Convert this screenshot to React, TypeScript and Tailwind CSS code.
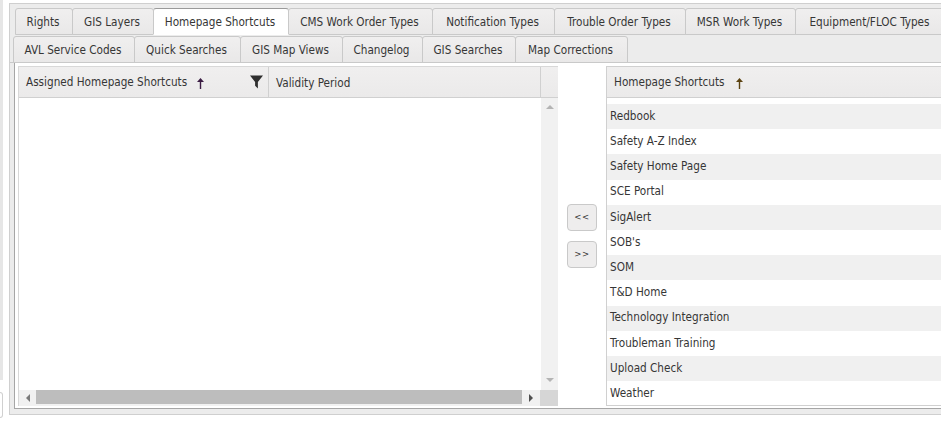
const tabsTop = [
  { label: 'Rights', w: 'w-[58px]' },
  { label: 'GIS Layers', w: 'w-[82px]' },
  { label: 'Homepage Shortcuts', w: 'w-[136px]', active: true },
  { label: 'CMS Work Order Types', w: 'w-[145px]' },
  { label: 'Notification Types', w: 'w-[123px]' },
  { label: 'Trouble Order Types', w: 'w-[132px]' },
  { label: 'MSR Work Types', w: 'w-[111px]' },
  { label: 'Equipment/FLOC Types', w: 'w-[151px]' },
];

const tabsBottom = [
  { label: 'AVL Service Codes', w: 'w-[122px]' },
  { label: 'Quick Searches', w: 'w-[107px]' },
  { label: 'GIS Map Views', w: 'w-[103px]' },
  { label: 'Changelog', w: 'w-[81px]' },
  { label: 'GIS Searches', w: 'w-[94px]' },
  { label: 'Map Corrections', w: 'w-[113px]' },
];

const shortcuts = [
  'Redbook',
  'Safety A-Z Index',
  'Safety Home Page',
  'SCE Portal',
  'SigAlert',
  "SOB's",
  'SOM',
  'T&D Home',
  'Technology Integration',
  'Troubleman Training',
  'Upload Check',
  'Weather',
];

const Tab = ({ label, w, active }: { label: string; w: string; active?: boolean }) => (
  <div
    className={`${w} -ml-px h-[27px] shrink-0 flex items-center justify-center pt-[2px] pr-[2px] rounded-t-[3px] border border-[#c9c9c9] first:ml-0 ${
      active ? 'relative bg-white border-b-white border-t-[#9a9a9a]' : 'bg-linear-to-b from-[#f0efef] to-[#e9e8e8]'
    }`}
  >
    {label}
  </div>
);

const SortArrow = ({ color, ml }: { color: string; ml: string }) => (
  <svg width="7" height="11" viewBox="0 0 7 11" className={`${ml} mt-[1px]`}>
    <path d="M3.5 0 L7 4 H4.2 V11 H2.8 V4 H0 Z" fill={color} />
  </svg>
);

const App = () => {
  return (
    <div className="w-[941px] h-[425px] overflow-hidden bg-white flex text-[11.65px] text-[#363636] font-['DejaVu_Sans_Condensed','DejaVu_Sans',sans-serif]">
      <div className="w-[3px] shrink-0 flex flex-col">
        <div className="h-[380px] bg-[#e6e6e6]" />
        <div className="mt-[12px] h-[26px] rounded-r-[3px] border border-l-0 border-[#d0d0d0]" />
      </div>
      <div className="mt-[3px] ml-[6px] w-[940px] h-[412px] shrink-0 border border-[#cfcfcf] border-r-0 bg-[#ececec] flex flex-col">
        <div className="pt-[4px] flex flex-col">
          <div className="flex pl-[5px] mb-[1px]">
            {tabsTop.map((t) => (
              <Tab key={t.label} {...t} />
            ))}
          </div>
          <div className="flex pl-[3px] h-[27px] border-b border-[#c9c9c9]">
            {tabsBottom.map((t) => (
              <Tab key={t.label} {...t} />
            ))}
          </div>
        </div>
        <div className="ml-[4px] mb-[5px] flex-1 min-h-0 border-l border-b border-[#a6a6a6] bg-white pt-[3px] pl-[3px] pb-[2px] flex">
          <div className="w-[540px] shrink-0 flex flex-col border-t border-l border-[#d8d8d8] bg-white">
            <div className="h-[31px] shrink-0 flex bg-linear-to-b from-[#f0efef] to-[#ebeaea] border-b border-[#d0d0d0]">
              <div className="w-[250px] flex items-center pl-[7px] pt-[2px] border-r border-[#d0d0d0] relative">
                Assigned Homepage Shortcuts
                <SortArrow color="#3b1d44" ml="ml-[10px]" />
                <svg width="13" height="14" viewBox="0 0 14 14" className="absolute right-[5px] top-[8px]">
                  <path d="M0 0 H14 L8.5 7 V14 L5.5 11 V7 Z" fill="#2f2f2f" />
                </svg>
              </div>
              <div className="w-[272px] flex items-center pl-[7px] pt-[3px] border-r border-[#d0d0d0]">Validity Period</div>
              <div className="flex-1" />
            </div>
            <div className="flex-1 min-h-0 flex">
              <div className="flex-1" />
              <div className="w-[17px] bg-[#f1f1f1] flex flex-col items-center justify-between pt-[7px] pb-[8px]">
                <svg width="8" height="4" viewBox="0 0 8 4"><path d="M4 0 L8 4 H0 Z" fill="#b4b4b4" /></svg>
                <svg width="8" height="4" viewBox="0 0 8 4"><path d="M0 0 H8 L4 4 Z" fill="#b4b4b4" /></svg>
              </div>
            </div>
            <div className="h-[16px] shrink-0 flex bg-[#f1f1f1]">
              <div className="w-[17px] flex items-center justify-center">
                <svg width="4" height="8" viewBox="0 0 4 8"><path d="M4 0 V8 L0 4 Z" fill="#7a7a7a" /></svg>
              </div>
              <div className="w-[486px] mb-[2px] bg-[#bdbdbd]" />
              <div className="w-[18px] flex items-center justify-center">
                <svg width="4" height="8" viewBox="0 0 4 8"><path d="M0 0 L4 4 L0 8 Z" fill="#505050" /></svg>
              </div>
              <div className="flex-1 bg-[#d6d6d6]" />
            </div>
          </div>
          <div className="w-[48px] shrink-0 flex flex-col items-center gap-[10px] pt-[138px] text-[9.5px]">
            <div className="w-[30px] h-[27px] rounded-[4px] border border-[#c9c9c9] bg-[#eeeded] flex items-center justify-center tracking-[0.5px]">&lt;&lt;</div>
            <div className="w-[30px] h-[27px] rounded-[4px] border border-[#c9c9c9] bg-[#eeeded] flex items-center justify-center tracking-[0.5px]">&gt;&gt;</div>
          </div>
          <div className="flex-1 min-w-0 h-[340px] flex flex-col border-l border-b border-[#d0d0d0] bg-white">
            <div className="h-[32px] shrink-0 flex items-center pl-[7px] pt-[1px] bg-linear-to-b from-[#f0efef] to-[#ebeaea] border-y border-[#d0d0d0]">
              Homepage Shortcuts
              <SortArrow color="#5b4210" ml="ml-[12px]" />
            </div>
            <div className="flex-1 min-h-0 overflow-hidden pt-[6px]">
              {shortcuts.map((s, i) => (
                <div key={s} className={`h-[25.2px] flex items-center pl-[3px] ${i % 2 === 0 ? 'bg-[#f0f0f0]' : 'bg-white'}`}>
                  {s}
                </div>
              ))}
            </div>
          </div>
        </div>
      </div>
    </div>
  );
};

export default App;
